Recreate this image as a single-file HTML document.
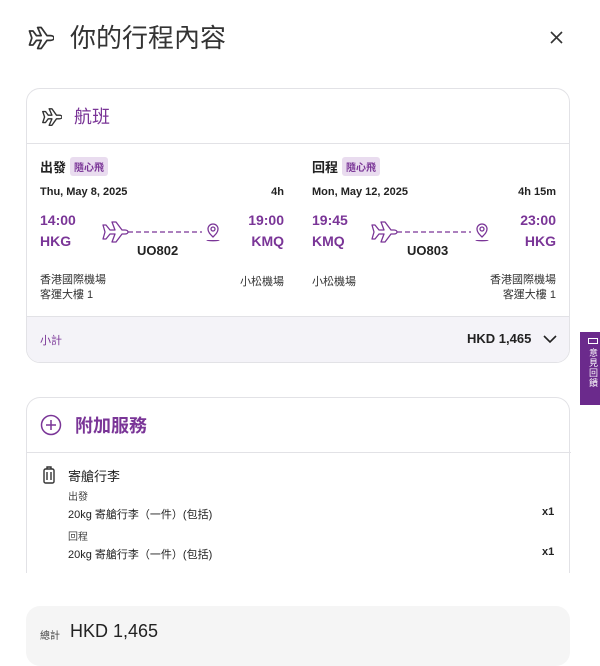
<!DOCTYPE html>
<html><head><meta charset="utf-8"><style>
*{margin:0;padding:0;box-sizing:border-box}
body{width:600px;height:654px;overflow:hidden;background:#fff;font-family:"Liberation Sans","Noto Sans CJK TC",sans-serif;color:#222;position:relative}
.a{position:absolute}
.p{color:#7a3597}
.b{font-weight:bold}
.card{position:absolute;left:26px;width:544px;border:1px solid #e2e2e6;border-radius:14px;background:#fff}
.tag{display:inline-block;background:#e9dcef;color:#7a3597;font-size:10px;padding:2px 4px;border-radius:3px;vertical-align:1px;margin-left:4px}
.s{font-size:11px}
.t{font-size:14px;font-weight:bold;color:#7a3597}
</style></head><body>
<svg class="a" style="left:26px;top:24px" width="28" height="28" viewBox="0 0 24 24" fill="none" stroke="#333" stroke-width="1.5" stroke-linejoin="round"><path d="M3 6l3 0 3 4 4 0-3-7 3 0 5 7 3 0c2 0 3 1 3 2s-1 2-3 2l-3 0-5 7-3 0 3-7-4 0-3 4-3 0 2-6z"/></svg>
<div class="a" style="left:70px;top:18px;font-size:26px;color:#333">你的行程內容</div>
<svg class="a" style="left:550px;top:31px" width="13" height="13" viewBox="0 0 13 13" stroke="#333" stroke-width="1.6"><path d="M1 1l11 11M12 1L1 12"/></svg>

<div class="card" style="top:88px;height:275px;overflow:hidden">
<svg class="a" style="left:13px;top:17px" width="22" height="22" viewBox="0 0 24 24" fill="none" stroke="#333" stroke-width="1.5" stroke-linejoin="round"><path d="M3 6l3 0 3 4 4 0-3-7 3 0 5 7 3 0c2 0 3 1 3 2s-1 2-3 2l-3 0-5 7-3 0 3-7-4 0-3 4-3 0 2-6z"/></svg>
<div class="a p" style="left:47px;top:14px;font-size:18px">航班</div>
<div class="a" style="left:0;top:54px;width:544px;border-top:1px solid #e2e2e6"></div>

<div class="a" style="left:13px;top:68px;font-size:13px;font-weight:bold">出發<span class="tag">隨心飛</span></div>
<div class="a s b" style="left:13px;top:97px">Thu, May 8, 2025</div>
<div class="a s b" style="left:240px;top:97px;width:17px;text-align:right">4h</div>
<div class="a t" style="left:13px;top:123px">14:00</div>
<div class="a t" style="left:13px;top:144px">HKG</div>
<div class="a t" style="left:200px;top:123px;width:57px;text-align:right">19:00</div>
<div class="a t" style="left:200px;top:144px;width:57px;text-align:right">KMQ</div>
<svg class="a" style="left:75px;top:132px" width="122" height="24" viewBox="0 0 122 24" fill="none" stroke="#7a3597" stroke-width="1.3" stroke-linejoin="round"><path d="M1 4l3 0 4 5 5 0-3-8 4 0 6 8 3 0c2 0 3 1 3 2s-1 2-3 2l-3 0-6 8-4 0 3-8-5 0-4 5-3 0 2-7z"/><path d="M26 11h74" stroke-dasharray="5 3"/><path d="M111 16c-3-3-5-5-5-8a5 5 0 0 1 10 0c0 3-2 5-5 8z"/><circle cx="111" cy="8" r="2"/><path d="M105 19c0 1 12 1 12 0"/></svg>
<div class="a b" style="left:110px;top:154px;font-size:13px">UO802</div>
<div class="a s" style="left:13px;top:184px;color:#333;line-height:15px">香港國際機場<br>客運大樓 1</div>
<div class="a s" style="left:200px;top:184px;width:57px;text-align:right;color:#333">小松機場</div>

<div class="a" style="left:285px;top:68px;font-size:13px;font-weight:bold">回程<span class="tag">隨心飛</span></div>
<div class="a s b" style="left:285px;top:97px">Mon, May 12, 2025</div>
<div class="a s b" style="left:470px;top:97px;width:59px;text-align:right">4h 15m</div>
<div class="a t" style="left:285px;top:123px">19:45</div>
<div class="a t" style="left:285px;top:144px">KMQ</div>
<div class="a t" style="left:470px;top:123px;width:59px;text-align:right">23:00</div>
<div class="a t" style="left:470px;top:144px;width:59px;text-align:right">HKG</div>
<svg class="a" style="left:344px;top:132px" width="122" height="24" viewBox="0 0 122 24" fill="none" stroke="#7a3597" stroke-width="1.3" stroke-linejoin="round"><path d="M1 4l3 0 4 5 5 0-3-8 4 0 6 8 3 0c2 0 3 1 3 2s-1 2-3 2l-3 0-6 8-4 0 3-8-5 0-4 5-3 0 2-7z"/><path d="M26 11h74" stroke-dasharray="5 3"/><path d="M111 16c-3-3-5-5-5-8a5 5 0 0 1 10 0c0 3-2 5-5 8z"/><circle cx="111" cy="8" r="2"/><path d="M105 19c0 1 12 1 12 0"/></svg>
<div class="a b" style="left:380px;top:154px;font-size:13px">UO803</div>
<div class="a s" style="left:285px;top:184px;color:#333">小松機場</div>
<div class="a s" style="left:430px;top:184px;width:99px;text-align:right;color:#333;line-height:15px">香港國際機場<br>客運大樓 1</div>

<div class="a" style="left:0;top:227px;width:544px;height:48px;background:#f4f3f8;border-top:1px solid #e2e2e6"></div>
<div class="a p s" style="left:13px;top:243px">小計</div>
<div class="a b" style="left:440px;top:242px;font-size:13px">HKD 1,465</div>
<svg class="a" style="left:516px;top:245px" width="14" height="10" viewBox="0 0 14 10" fill="none" stroke="#222" stroke-width="1.6"><path d="M1 2l6 6 6-6"/></svg>
</div>

<div class="card" style="top:397px;height:200px;border-bottom:none;border-radius:14px 14px 0 0">
<svg class="a" style="left:13px;top:16px" width="22" height="22" viewBox="0 0 22 22" fill="none" stroke="#7a3597" stroke-width="1.5"><circle cx="11" cy="11" r="9.5"/><path d="M11 6v10M6 11h10"/></svg>
<div class="a p b" style="left:48px;top:14px;font-size:18px">附加服務</div>
<div class="a" style="left:0;top:54px;width:544px;border-top:1px solid #e2e2e6"></div>
<svg class="a" style="left:16px;top:68px" width="12" height="18" viewBox="0 0 12 18" fill="none" stroke="#333" stroke-width="1.4"><rect x="1" y="3" width="10" height="14" rx="1.5"/><path d="M4 3V1h4v2M4 6v8M8 6v8"/></svg>
<div class="a" style="left:41px;top:68px;font-size:13px">寄艙行李</div>
<div class="a" style="left:41px;top:90px;font-size:10px;color:#444">出發</div>
<div class="a s" style="left:41px;top:108px">20kg 寄艙行李（一件）(包括)</div>
<div class="a s b" style="left:515px;top:108px">x1</div>
<div class="a" style="left:41px;top:130px;font-size:10px;color:#444">回程</div>
<div class="a s" style="left:41px;top:148px">20kg 寄艙行李（一件）(包括)</div>
<div class="a s b" style="left:515px;top:148px">x1</div>
</div>
<div class="a" style="left:0;top:573px;width:600px;height:33px;background:#fff"></div>

<div class="a" style="left:26px;top:606px;width:544px;height:60px;background:#f5f5f5;border-radius:14px"></div>
<div class="a" style="left:40px;top:627px;font-size:10px;color:#444">總計</div>
<div class="a" style="left:70px;top:621px;font-size:18px;color:#222">HKD 1,465</div>

<div class="a" style="left:580px;top:332px;width:20px;height:73px;background:#6b2a8c"></div>
<div class="a" style="left:588px;top:338px;width:10px;height:6px;border:1px solid #fff"></div>
<div class="a" style="left:589px;top:348px;font-size:9px;color:#fff;line-height:10px;width:10px">意見回饋</div>
</body></html>
